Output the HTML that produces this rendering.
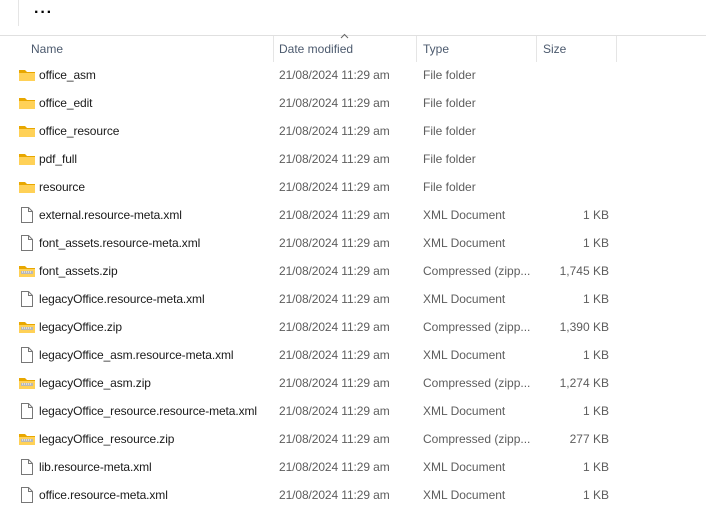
<!DOCTYPE html><html><head><style>
body{margin:0;width:706px;height:498px;overflow:hidden;background:#fff;font-family:"Liberation Sans",sans-serif;font-size:12px;position:relative}
.a{position:absolute;white-space:nowrap}
.h{color:#4c5a6e;top:42px}
.sep{position:absolute;top:36px;height:26px;width:1px;background:#e5e5e5}
.r{position:absolute;left:0;width:706px;height:28px}
.r span{position:absolute;top:7px}
.n{left:39px;color:#1a1a1a;letter-spacing:-0.1px}.d{left:279px;color:#5d5d5d;letter-spacing:-0.1px}.t{left:423px;color:#5d5d5d}.s{right:97px;color:#5d5d5d}
.ic{position:absolute;left:19px;top:7px}
</style></head><body>
<div class="a" style="left:18px;top:0;width:1px;height:26px;background:#e5e5e5"></div>
<div class="a" style="left:34px;top:3px;font-size:16px;font-weight:bold;letter-spacing:1px;line-height:20px">···</div>
<div class="a" style="left:0;top:35px;width:706px;height:1px;background:#e0e0e0"></div>
<div class="a h" style="left:31px">Name</div>
<div class="a h" style="left:279px">Date modified</div>
<div class="a h" style="left:423px">Type</div>
<div class="a h" style="left:543px">Size</div>
<svg class="a" style="left:340px;top:33px" width="9" height="6"><path d="M1 5L4.5 1.5L8 5" stroke="#666" fill="none"/></svg>
<div class="sep" style="left:273px"></div><div class="sep" style="left:416px"></div><div class="sep" style="left:536px"></div><div class="sep" style="left:616px"></div>
<div id="rows"></div>
<script>
var F='<svg class="ic" width="16" height="14"><path d="M0 2h6l2 2h8v9H0z" fill="#e8a700"/><path d="M0 5h16v8H0z" fill="#ffd157"/></svg>';
var X='<svg class="ic" style="left:21px;top:6px" width="12" height="16"><path d="M.5.5h7l4 4v11H.5z" fill="#fff" stroke="#777"/><path d="M7.5.5v4h4" fill="none" stroke="#777"/></svg>';
var Z='<svg class="ic" width="16" height="14"><path d="M0 2h6l2 2h8v9H0z" fill="#e8a700"/><path d="M0 5h16v8H0z" fill="#ffd157"/><path d="M2 7h12v3H2z" fill="#b8b8b8"/><path d="M3 8h10" stroke="#fff" stroke-dasharray="1 1"/></svg>';
var R=[["office_asm",F,"File folder",""],["office_edit",F,"File folder",""],["office_resource",F,"File folder",""],["pdf_full",F,"File folder",""],["resource",F,"File folder",""],
["external.resource-meta.xml",X,"XML Document","1 KB"],["font_assets.resource-meta.xml",X,"XML Document","1 KB"],["font_assets.zip",Z,"Compressed (zipp...","1,745 KB"],
["legacyOffice.resource-meta.xml",X,"XML Document","1 KB"],["legacyOffice.zip",Z,"Compressed (zipp...","1,390 KB"],["legacyOffice_asm.resource-meta.xml",X,"XML Document","1 KB"],
["legacyOffice_asm.zip",Z,"Compressed (zipp...","1,274 KB"],["legacyOffice_resource.resource-meta.xml",X,"XML Document","1 KB"],["legacyOffice_resource.zip",Z,"Compressed (zipp...","277 KB"],
["lib.resource-meta.xml",X,"XML Document","1 KB"],["office.resource-meta.xml",X,"XML Document","1 KB"]];
var h='';R.forEach(function(r,i){h+='<div class="r" style="top:'+(61+28*i)+'px">'+r[1]+'<span class="n">'+r[0]+'</span><span class="d">21/08/2024 11:29 am</span><span class="t">'+r[2]+'</span><span class="s">'+r[3]+'</span></div>'});
document.getElementById('rows').innerHTML=h;
</script></body></html>
